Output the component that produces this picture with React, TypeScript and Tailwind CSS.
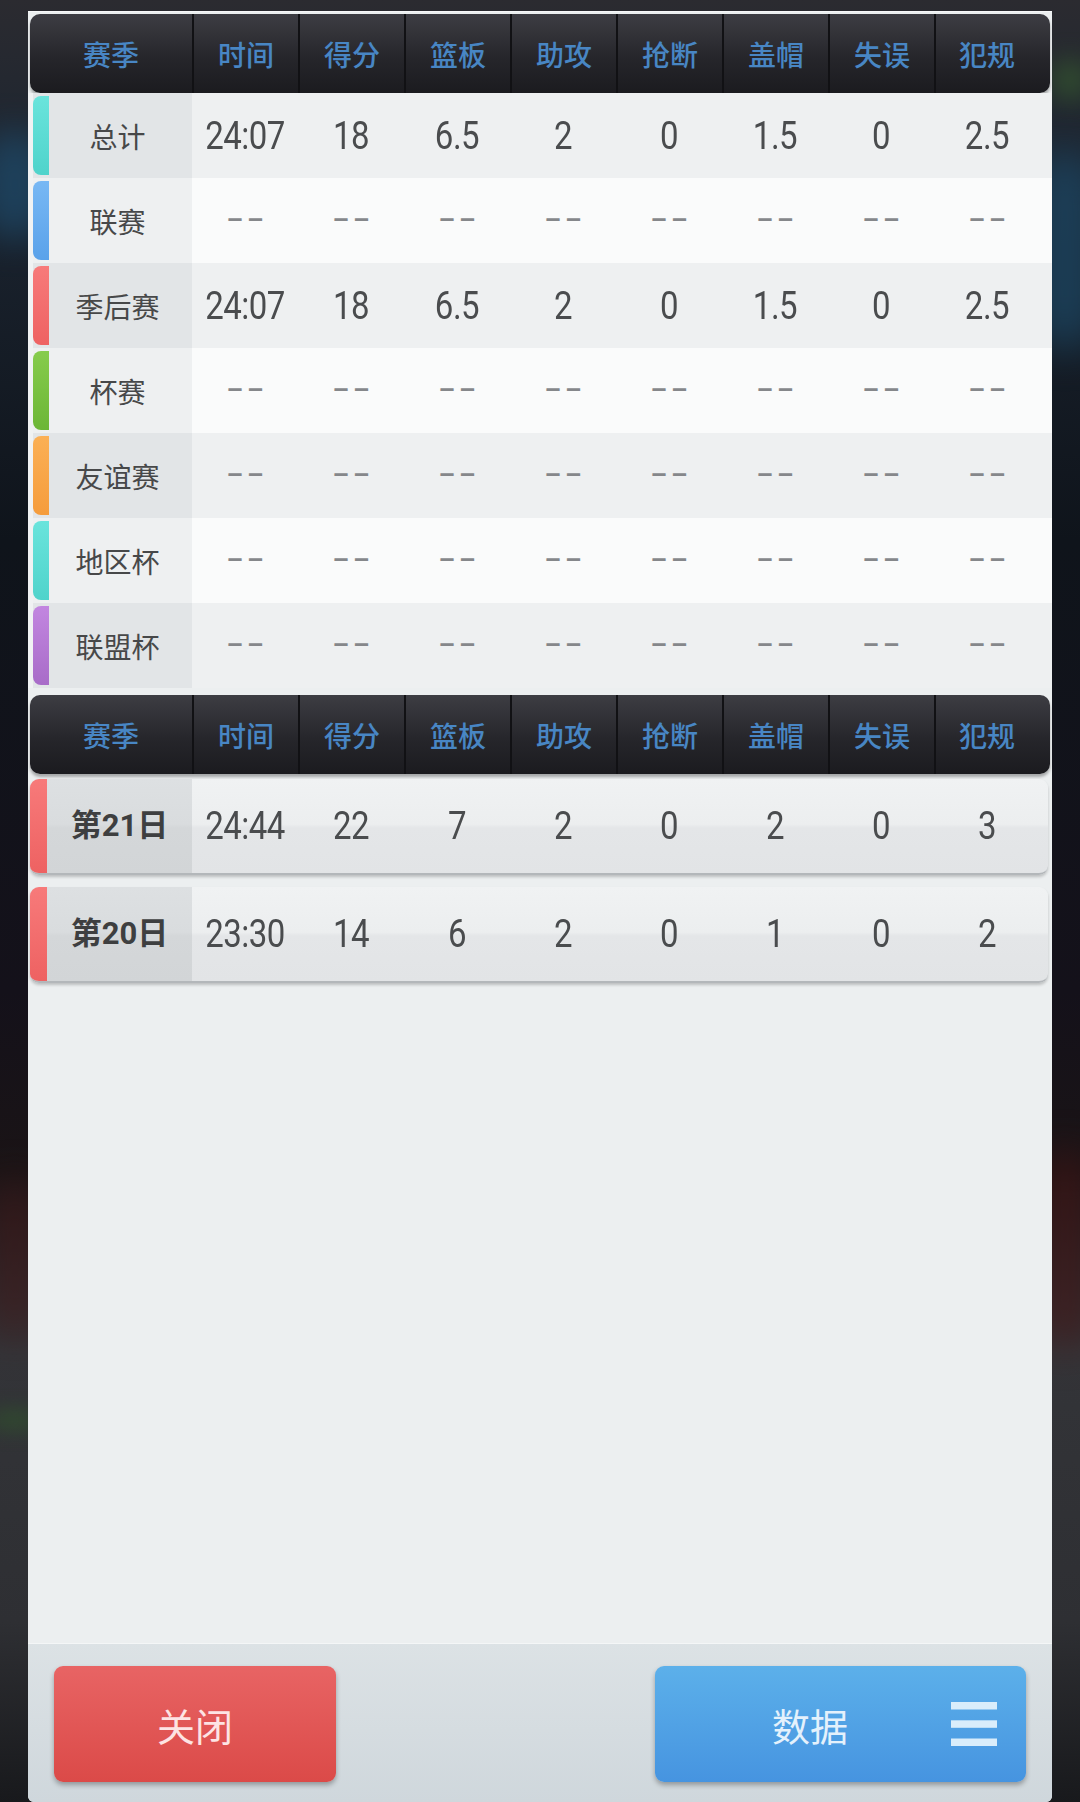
import React from "react";

const CJK = "font-['Noto_Sans_CJK_SC',sans-serif]";
const NUM = "font-['Roboto','Noto_Sans_CJK_SC',sans-serif]";

const headers = ["赛季", "时间", "得分", "篮板", "助攻", "抢断", "盖帽", "失误", "犯规"];

type Row = { name: string; bar: string; vals: string[] | null };

const totalVals = ["24:07", "18", "6.5", "2", "0", "1.5", "0", "2.5"];

const seasonRows: Row[] = [
  { name: "总计", bar: "bg-[linear-gradient(to_bottom,#6ae4dc,#4fd3cb)]", vals: totalVals },
  { name: "联赛", bar: "bg-[linear-gradient(to_bottom,#78b8f4,#5aa2ea)]", vals: null },
  { name: "季后赛", bar: "bg-[linear-gradient(to_bottom,#f77a7a,#ee6262)]", vals: totalVals },
  { name: "杯赛", bar: "bg-[linear-gradient(to_bottom,#86cc4c,#6cb636)]", vals: null },
  { name: "友谊赛", bar: "bg-[linear-gradient(to_bottom,#fbb055,#f59c3c)]", vals: null },
  { name: "地区杯", bar: "bg-[linear-gradient(to_bottom,#6ae4dc,#4fd3cb)]", vals: null },
  { name: "联盟杯", bar: "bg-[linear-gradient(to_bottom,#c286e0,#a86cc8)]", vals: null },
];

const games = [
  { name: "第21日", vals: ["24:44", "22", "7", "2", "0", "2", "0", "3"] },
  { name: "第20日", vals: ["23:30", "14", "6", "2", "0", "1", "0", "2"] },
];

function HeaderBar() {
  return (
    <div className="mx-[2px] h-[79px] rounded-[10px] bg-[linear-gradient(to_bottom,#3d3d43,#26262b_55%,#1b1b1f)] shadow-[0_3px_3px_rgba(0,0,0,0.3)] grid grid-cols-[162px_repeat(7,106px)_1fr] overflow-hidden">
      {headers.map((h, i) => (
        <div
          key={h}
          className={
            "flex items-center justify-center text-[28px] font-medium text-[#4886c4] " +
            CJK +
            (i > 0 ? " border-l-2 border-[#111114]" : "") +
            (i === 8 ? " pr-[12px]" : "")
          }
        >
          {h}
        </div>
      ))}
    </div>
  );
}

function Dash() {
  return (
    <span className={"text-[26px] font-bold text-[#85878a] tracking-[4px] pl-[4px] " + NUM}>––</span>
  );
}

function Num({ v }: { v: string }) {
  return (
    <span className={"inline-block text-[33px] leading-none text-[#4a4c4e] tracking-[-0.5px] scale-y-[1.15] " + NUM}>
      {v}
    </span>
  );
}

function SeasonRow({ row, idx }: { row: Row; idx: number }) {
  const even = idx % 2 === 0;
  const nameBg = even ? "bg-[#e2e5e7]" : "bg-[#eef0f1]";
  const dataBg = even ? "bg-[#eef0f1]" : "bg-[#fafbfb]";
  return (
    <div className={"h-[85px] grid grid-cols-[164px_repeat(8,106px)_1fr] " + dataBg}>
      <div className={"flex items-stretch " + nameBg}>
        <div className="w-[5px] bg-[#f0f2f3]" />
        <div className={"w-[16px] my-[3px] rounded-l-[8px] " + row.bar} />
        <div className={"flex-1 flex items-center justify-center pr-[6px] text-[28px] text-[#474849] " + CJK}>
          {row.name}
        </div>
      </div>
      {(row.vals ?? Array(8).fill(null)).map((v, i) => (
        <div key={i} className="flex items-center justify-center">
          {v === null ? <Dash /> : <Num v={v} />}
        </div>
      ))}
      <div />
    </div>
  );
}

function GameCard({ name, vals }: { name: string; vals: string[] }) {
  return (
    <div className="ml-[2px] mr-[4px] h-[96px] rounded-[9px] overflow-hidden border-b-2 border-[#b3b7ba] shadow-[0_2px_3px_rgba(0,0,0,0.2)] bg-[linear-gradient(to_bottom,#f0f2f3_0%,#eceeef_48%,#e4e6e8_52%,#e2e4e6_100%)] grid grid-cols-[162px_repeat(8,106px)_1fr]">
      <div className="flex items-stretch bg-[linear-gradient(to_bottom,#dde0e2_0%,#d9dcde_48%,#d4d7d9_52%,#d2d5d7_100%)]">
        <div className="w-[17px] bg-[linear-gradient(to_bottom,#f77a7a,#ee6262)]" />
        <div className={"flex-1 flex items-center justify-center text-[31px] font-bold text-[#3e3f40] " + NUM}>
          {name}
        </div>
      </div>
      {vals.map((v, i) => (
        <div key={i} className="flex items-center justify-center pb-[2px]">
          <Num v={v} />
        </div>
      ))}
      <div />
    </div>
  );
}

function MenuIcon() {
  return (
    <svg width="46" height="44" viewBox="0 0 46 44" className="mr-[29px] shrink-0">
      <rect x="0" y="0" width="46" height="7.5" fill="#d9edfb" />
      <rect x="0" y="18.3" width="46" height="7.5" fill="#d9edfb" />
      <rect x="0" y="36.5" width="46" height="7.5" fill="#d9edfb" />
    </svg>
  );
}

export default function App() {
  return (
    <div className="relative w-[1080px] h-[1802px] overflow-hidden bg-[linear-gradient(to_bottom,#2b2b30_0%,#1b2430_10%,#0f141b_30%,#14111a_55%,#1a1416_65%,#333438_75%,#2e2f33_90%,#18191c_100%)]">
      {/* blurred backdrop hints */}
      <div className="absolute left-[-20px] top-[130px] w-[70px] h-[110px] rounded-full bg-[#1f4d6e] blur-[18px] opacity-70" />
      <div className="absolute right-[-20px] top-[150px] w-[70px] h-[200px] rounded-full bg-[#1d4a68] blur-[20px] opacity-70" />
      <div className="absolute right-[-10px] top-[60px] w-[40px] h-[40px] rounded-full bg-[#3b6a2e] blur-[14px] opacity-60" />
      <div className="absolute left-[-10px] top-[1180px] w-[50px] h-[160px] rounded-full bg-[#4a1717] blur-[20px] opacity-50" />
      <div className="absolute right-[-10px] top-[1150px] w-[50px] h-[200px] rounded-full bg-[#4a1515] blur-[20px] opacity-60" />
      <div className="absolute left-[-10px] top-[1410px] w-[50px] h-[20px] rounded-full bg-[#2f5a2a] blur-[10px] opacity-60" />

      <div className="relative pt-[11px] px-[28px]">
        <div className="w-[1024px] h-[1791px] bg-[#eceff0] border-t border-[#f7f8f9] rounded-b-[6px] flex flex-col overflow-hidden">
          <div className="pt-[2px]">
            <HeaderBar />
          </div>
          <div>
            {seasonRows.map((r, i) => (
              <SeasonRow key={r.name} row={r} idx={i} />
            ))}
          </div>
          <div className="mt-[7px]">
            <HeaderBar />
          </div>
          <div className="mt-[5px] flex flex-col gap-[12px]">
            {games.map((g) => (
              <GameCard key={g.name} name={g.name} vals={g.vals} />
            ))}
          </div>
          <div className="flex-1" />
          <div className="h-[159px] border-t border-[#f4f6f7] bg-[linear-gradient(to_bottom,#dce2e5,#cfd7dc)] pt-[22px] px-[26px] flex justify-between items-start">
            <button className="w-[282px] h-[116px] rounded-[9px] bg-[linear-gradient(to_bottom,#e86464,#db4a48)] shadow-[0_3px_5px_rgba(0,0,0,0.3)] flex items-center justify-center">
              <span className={"text-[38px] text-[#fde4e4] " + CJK}>关闭</span>
            </button>
            <button className="w-[371px] h-[116px] rounded-[9px] bg-[linear-gradient(to_bottom,#5cb0ea,#4694e0)] shadow-[0_3px_5px_rgba(0,0,0,0.3)] flex items-center">
              <span className={"flex-1 text-center pl-[14px] text-[38px] text-[#e4f1fc] " + CJK}>数据</span>
              <MenuIcon />
            </button>
          </div>
        </div>
      </div>
    </div>
  );
}
